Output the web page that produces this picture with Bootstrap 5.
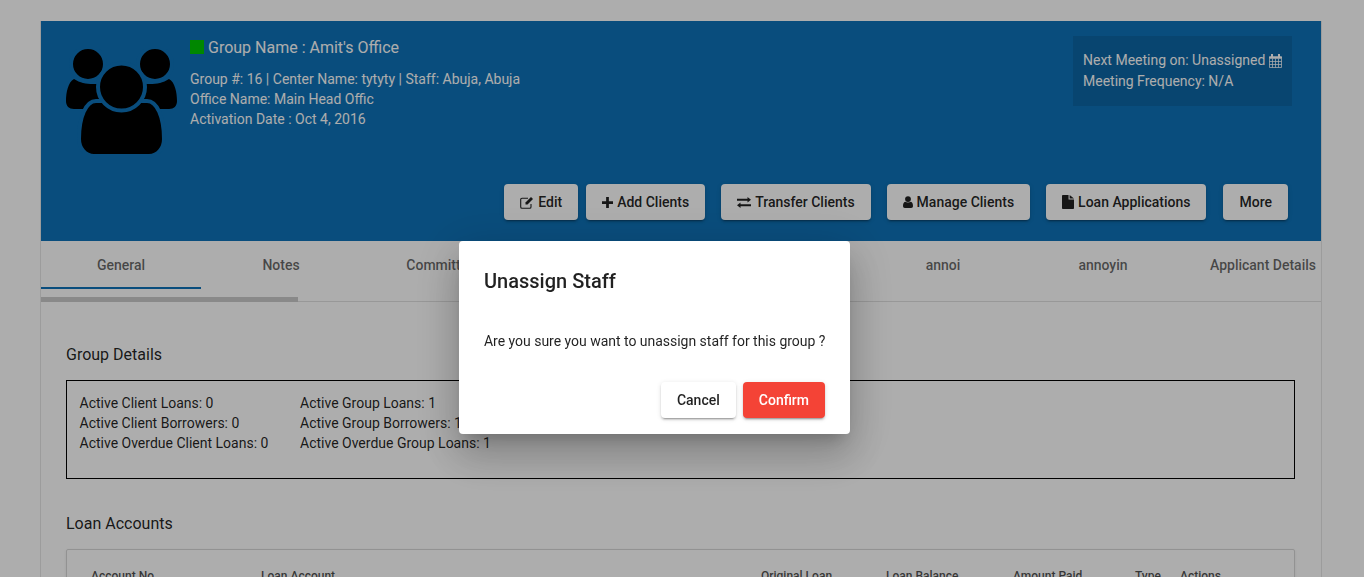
<!DOCTYPE html>
<html lang="en">
<head>
<meta charset="utf-8">
<title>Group</title>
<link href="https://cdn.jsdelivr.net/npm/bootstrap@5.3.0/dist/css/bootstrap.min.css" rel="stylesheet">
<style>
html,body{height:577px;overflow:hidden;background:#fff;font-family:Roboto,"Liberation Sans",sans-serif;font-size:14px;line-height:20px;color:rgba(0,0,0,.87)}
.page-wrap{margin:21px 42px 0 40px;border-left:1px solid #e6e6e6;border-right:1px solid #e6e6e6;height:556px;overflow:hidden}
.group-head{height:220px;background:#0e72b8;color:#fff;padding:15px 33px 21px 25px}
.group-icon{width:111px;height:106px;margin-top:13px;flex:none;fill:#000}
.group-icon .cut{stroke:#0e72b8;stroke-width:4}
.group-info{margin-left:13px}
.group-title{font-size:16px;line-height:24px;margin:0 0 9px;font-weight:400}
.status-dot{display:inline-block;width:14px;height:14px;background:#00c800;margin-right:4px;vertical-align:-1px}
.meeting-box{background:rgba(0,0,0,.1);width:219px;height:70px;padding:14px 10px;line-height:21px;margin-right:-4px}
.act-btn{height:36px;padding:0 16px;font-size:14px;font-weight:500;line-height:36px;color:rgba(0,0,0,.87);background:#fff;border:0;border-radius:4px;box-shadow:0 3px 1px -2px rgba(0,0,0,.2),0 2px 2px 0 rgba(0,0,0,.14),0 1px 5px 0 rgba(0,0,0,.12);white-space:nowrap;display:inline-flex;align-items:center;gap:4px}
.act-btn:hover{background:#fff;color:rgba(0,0,0,.87)}
.act-btn svg{fill:currentColor;flex:none}
.act-row{margin-top:auto}
.g8{margin-left:8px}.g16{margin-left:16px}.g17{margin-left:17px}
.tab-strip{height:48px;display:flex;overflow:hidden}
.tab-cell{flex:none;width:160px;height:48px;line-height:48px;text-align:center;font-weight:500;color:rgba(0,0,0,.6);white-space:nowrap;overflow:hidden}
.tab-cell.on{border-bottom:2px solid #0e72b8}
.tab-wide{width:171px}
.scroll-track{height:13px;display:flex;align-items:flex-end;border-bottom:1px solid #e0e0e0}
.scroll-thumb{width:257px;height:5px;background:#cbcbcb;margin-bottom:-1px}
.tab-body{padding:41px 26px 0 25px}
.sect-title{font-size:16px;line-height:24px;margin:0 0 13px;font-weight:400;color:rgba(0,0,0,.87)}
.detail-box{border:1px solid #000;height:99px;padding:12px 12.500px;margin-bottom:33px;color:rgba(0,0,0,.87)}
.detail-col{width:220.500px;flex:none}
.acct-box{border:1px solid #d8d8d8;border-radius:2px;height:200px;box-shadow:0 1px 3px rgba(0,0,0,.08)}
.acct-table{table-layout:fixed;width:100%;margin-top:16px}
.acct-table th{padding:0 0 0 24px;font-size:12px;font-weight:500;line-height:20px;border:0;background:transparent;color:rgba(0,0,0,.7);white-space:nowrap;overflow:visible}
.acct-table th:nth-child(1){width:170px}
.acct-table th:nth-child(2){width:500px}
.acct-table th:nth-child(3){width:125px}
.acct-table th:nth-child(4){width:127px}
.acct-table th:nth-child(5){width:122px}
.acct-table th:nth-child(6){width:45px}
.veil{position:fixed;inset:0;background:rgba(0,0,0,.32);z-index:10}
.dlg{position:fixed;left:459px;top:241px;width:391px;height:193px;background:#fff;border-radius:4px;padding:24px 25px;z-index:11;box-shadow:0 11px 15px -7px rgba(0,0,0,.2),0 24px 38px 3px rgba(0,0,0,.14),0 9px 46px 8px rgba(0,0,0,.12)}
.dlg-title{font-size:20px;line-height:32px;font-weight:500;margin:0 0 34px;color:rgba(0,0,0,.87)}
.dlg-text{margin:0 0 31px;white-space:nowrap;line-height:20px;letter-spacing:-.02px}
.dlg-foot{gap:7px}
.dlg-btn{height:36px;padding:0 16px;border:0;border-radius:4px;font-weight:500;font-size:14px;line-height:36px;box-shadow:0 3px 1px -2px rgba(0,0,0,.2),0 2px 2px 0 rgba(0,0,0,.14),0 1px 5px 0 rgba(0,0,0,.12)}
.dlg-cancel{background:#fff;color:rgba(0,0,0,.87)}
.dlg-ok{background:#f44336;color:#fff}
.cal-icon{flex:none}
</style>
</head>
<body>
<div class="page-wrap">
  <div class="group-head d-flex flex-column">
    <div class="d-flex justify-content-between align-items-start">
      <div class="d-flex">
        <svg class="group-icon" viewBox="0 0 111 106" aria-hidden="true">
          <path d="M8 30C14 34 20 35 27 35L40 35L40 60L8 60C3 60 0 57 0 52C0 44 2 33 8 30Z"/>
          <path d="M103 30C97 34 91 35 84 35L71 35L71 60L103 60C108 60 111 57 111 52C111 44 109 33 103 30Z"/>
          <circle class="cut" cx="22" cy="15" r="17"/>
          <circle class="cut" cx="89" cy="15" r="17"/>
          <path class="cut" d="M30 52L81 52C91 52 98 68 98 90C98 99 92 107 83 107L28 107C19 107 13 99 13 90C13 68 20 52 30 52Z"/>
          <circle class="cut" cx="55.500" cy="38" r="23.500"/>
        </svg>
        <div class="group-info">
          <h1 class="group-title"><span class="status-dot"></span>Group Name : Amit's Office</h1>
          <div>Group #: 16 | Center Name: tytyty | Staff: Abuja, Abuja</div>
          <div>Office Name: Main Head Offic</div>
          <div>Activation Date : Oct 4, 2016</div>
        </div>
      </div>
      <div class="meeting-box">
        <div class="d-flex align-items-center gap-1 text-nowrap">Next Meeting on: Unassigned
          <svg class="cal-icon" width="13" height="14" viewBox="0 0 13 14" aria-hidden="true"><path fill="none" stroke="currentColor" stroke-opacity=".75" d="M.5 2.500H12.500V13.500H.5ZM.5 4.500H12.500M.5 7.500H12.500M.5 10.500H12.500M3.500 4.500V13.500M6.500 4.500V13.500M9.500 4.500V13.500"/><path fill="currentColor" d="M2 0h2v3.500H2zM9 0h2v3.500H9zM0 3h13v1H0z"/></svg>
        </div>
        <div>Meeting Frequency: N/A</div>
      </div>
    </div>
    <div class="act-row d-flex justify-content-end">
      <button class="btn act-btn"><svg width="14" height="13" viewBox="0 0 14 13" aria-hidden="true"><path fill="none" stroke="currentColor" stroke-width="1.100" d="M11 8v3a1.300 1.300 0 0 1-1.300 1.300H2A1.300 1.300 0 0 1 .7 11V3.500A1.300 1.300 0 0 1 2 2.200h6"/><path d="M5.500 6.500 11 .9l2 2-5.500 5.600H5.500z"/></svg>Edit</button>
      <button class="btn act-btn g8"><svg width="11" height="11" viewBox="0 0 12 12" aria-hidden="true"><path d="M4.500 0h3v4.500H12v3H7.500V12h-3V7.500H0v-3h4.500z"/></svg>Add Clients</button>
      <button class="btn act-btn g16"><svg width="14" height="11" viewBox="0 0 14 11" aria-hidden="true"><path d="M10.500 0 14 2.800 10.500 5.600V3.800H0V1.800h10.500zM3.500 5.400V7.200H14v2H3.500V11L0 8.200z"/></svg>Transfer Clients</button>
      <button class="btn act-btn g16"><svg width="10" height="12" viewBox="0 0 11 13" aria-hidden="true"><circle cx="5.500" cy="3.300" r="3.200"/><path d="M2.400 6.200c1.800 1.200 4.400 1.200 6.200 0C10.300 6.800 11 8.500 11 10.800 11 12.100 10.200 13 9 13H2c-1.200 0-2-.9-2-2.200 0-2.300.7-4 2.400-4.600z"/></svg>Manage Clients</button>
      <button class="btn act-btn g16"><svg width="12" height="14" viewBox="0 0 11 14" preserveAspectRatio="none" aria-hidden="true"><path d="M0 .8C0 .3.300 0 .8 0H6v4.500h5v8.700c0 .5-.3.800-.8.800H.8c-.5 0-.8-.3-.8-.8zM7 0l4 3.500H7z"/></svg>Loan Applications</button>
      <button class="btn act-btn g17">More</button>
    </div>
  </div>
  <div class="tab-strip">
    <div class="tab-cell on">General</div>
    <div class="tab-cell">Notes</div>
    <div class="tab-cell">Committee</div>
    <div class="tab-cell tab-wide"></div>
    <div class="tab-cell tab-wide"></div>
    <div class="tab-cell">annoi</div>
    <div class="tab-cell">annoyin</div>
    <div class="tab-cell">Applicant Details</div>
  </div>
  <div class="scroll-track"><div class="scroll-thumb"></div></div>
  <div class="tab-body">
    <h2 class="sect-title">Group Details</h2>
    <div class="detail-box d-flex">
      <div class="detail-col">
        <div>Active Client Loans: 0</div>
        <div>Active Client Borrowers: 0</div>
        <div>Active Overdue Client Loans: 0</div>
      </div>
      <div class="detail-col">
        <div>Active Group Loans: 1</div>
        <div>Active Group Borrowers: 1</div>
        <div>Active Overdue Group Loans: 1</div>
      </div>
    </div>
    <h2 class="sect-title">Loan Accounts</h2>
    <div class="acct-box">
      <table class="table acct-table">
        <thead><tr><th>Account No</th><th>Loan Account</th><th>Original Loan</th><th>Loan Balance</th><th>Amount Paid</th><th>Type</th><th>Actions</th></tr></thead>
      </table>
    </div>
  </div>
</div>
<div class="veil"></div>
<div class="dlg" role="dialog">
  <h2 class="dlg-title">Unassign Staff</h2>
  <p class="dlg-text">Are you sure you want to unassign staff for this group ?</p>
  <div class="dlg-foot d-flex justify-content-end">
    <button class="btn dlg-btn dlg-cancel">Cancel</button>
    <button class="btn dlg-btn dlg-ok">Confirm</button>
  </div>
</div>
<script src="https://cdn.jsdelivr.net/npm/bootstrap@5.3.0/dist/js/bootstrap.bundle.min.js"></script>
</body>
</html>
